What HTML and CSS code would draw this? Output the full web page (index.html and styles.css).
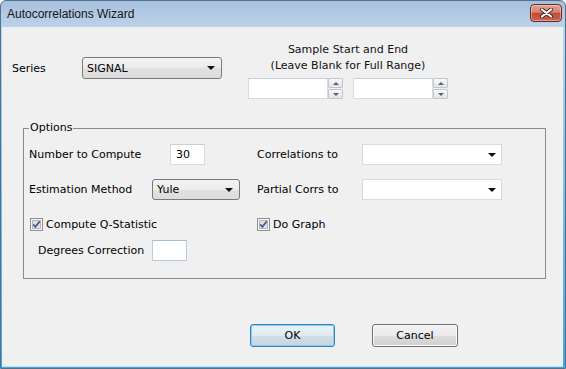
FILE: index.html
```html
<!DOCTYPE html>
<html>
<head>
<meta charset="utf-8">
<title>Autocorrelations Wizard</title>
<link rel="stylesheet" href="styles.css">
</head>
<body>
<div class="window">
  <div class="titlebar">
    <span class="title">Autocorrelations Wizard</span>
    <button class="close" aria-label="Close">
      <svg width="13" height="10" viewBox="0 0 13 10">
        <path d="M2 1.5 L11 8.5 M11 1.5 L2 8.5" stroke="#4e2a2a" stroke-width="4" stroke-linecap="round"/>
        <path d="M2 1.5 L11 8.5 M11 1.5 L2 8.5" stroke="#ffffff" stroke-width="2.2" stroke-linecap="round"/>
      </svg>
    </button>
  </div>
  <div class="client">
    <div class="top">
      <div class="series">
        <span class="lbl series-lbl">Series</span>
        <div class="combo btn-combo series-combo"><span class="combo-text">SIGNAL</span><i class="arrow"></i></div>
      </div>
      <div class="sample">
        <div class="sample-text">Sample Start and End<br>(Leave Blank for Full Range)</div>
        <div class="spins">
          <div class="spin">
            <div class="edit spin-edit"></div>
            <div class="spin-btns"><div class="sb"><i class="tri-up"></i></div><div class="sb"><i class="tri-down"></i></div></div>
          </div>
          <div class="spin">
            <div class="edit spin-edit"></div>
            <div class="spin-btns"><div class="sb"><i class="tri-up"></i></div><div class="sb"><i class="tri-down"></i></div></div>
          </div>
        </div>
      </div>
    </div>

    <fieldset class="group">
      <legend>Options</legend>
      <div class="row row1">
        <div class="cell1"><span class="lbl w-number">Number to Compute</span><div class="edit small-edit">30</div></div>
        <div class="cell2"><span class="lbl w-col2">Correlations to</span><div class="combo white-combo"><i class="arrow"></i></div></div>
      </div>
      <div class="row row2">
        <div class="cell1"><span class="lbl w-method">Estimation Method</span><div class="combo btn-combo yule-combo"><span class="combo-text">Yule</span><i class="arrow"></i></div></div>
        <div class="cell2"><span class="lbl w-col2">Partial Corrs to</span><div class="combo white-combo"><i class="arrow"></i></div></div>
      </div>
      <div class="row row3">
        <div class="cell1 check-cell1">
          <svg class="cb" width="13" height="13" viewBox="0 0 13 13"><rect x="0.5" y="0.5" width="12" height="12" fill="#f7f7f7" stroke="#8e8f8f"/><rect x="2.5" y="2.5" width="8" height="8" fill="#dfe1e4" stroke="#b3b6ba"/><path d="M3.3 6.4 L5.4 8.8 L9.7 3.4" fill="none" stroke="#4a5d87" stroke-width="1.7"/></svg>
          <span class="cb-text">Compute Q-Statistic</span>
        </div>
        <div class="cell2">
          <svg class="cb" width="13" height="13" viewBox="0 0 13 13"><rect x="0.5" y="0.5" width="12" height="12" fill="#f7f7f7" stroke="#8e8f8f"/><rect x="2.5" y="2.5" width="8" height="8" fill="#dfe1e4" stroke="#b3b6ba"/><path d="M3.3 6.4 L5.4 8.8 L9.7 3.4" fill="none" stroke="#4a5d87" stroke-width="1.7"/></svg>
          <span class="cb-text">Do Graph</span>
        </div>
      </div>
      <div class="row row4">
        <div class="cell1"><span class="lbl w-degrees">Degrees Correction</span><div class="edit small-edit blue-edit"></div></div>
      </div>
    </fieldset>

    <div class="buttons">
      <button class="btn default">OK</button>
      <button class="btn cancel">Cancel</button>
    </div>
  </div>
</div>
</body>
</html>
```

FILE: styles.css
```css
* { box-sizing: border-box; }
html, body { margin: 0; padding: 0; }
body {
  width: 566px;
  height: 369px;
  overflow: hidden;
  background: #ffffff;
  font-family: "DejaVu Sans", sans-serif;
  font-size: 11px;
  color: #000;
}
.window {
  width: 566px;
  height: 369px;
  display: flex;
  flex-direction: column;
  border: 1px solid #52718f;
  border-radius: 6px 6px 0 0;
  background: linear-gradient(#a8c0dc 0px, #bcd2ea 26px, #b9d6ef 27px, #3fa9dc 100%);
  overflow: hidden;
}
.titlebar {
  height: 26px;
  flex: none;
  display: flex;
  align-items: flex-start;
  padding-left: 6px;
}
.title {
  font-family: "Liberation Sans", sans-serif;
  font-size: 12px;
  line-height: 16px;
  margin-top: 5px;
  color: #141414;
}
.close {
  margin-left: auto;
  margin-right: 3px;
  margin-top: 3px;
  width: 32px;
  height: 18px;
  padding: 0;
  border: 1px solid #6b2a27;
  border-radius: 4px;
  background: linear-gradient(#e3a394 0%, #d58372 45%, #c34a35 52%, #c9664f 100%);
  box-shadow: inset 0 0 0 1px rgba(255, 230, 220, 0.45);
  display: flex;
  align-items: center;
  justify-content: center;
}
.client {
  flex: 1;
  margin: 0 2px 2px 1px;
  background: #f0f0f0;
  display: flex;
  flex-direction: column;
  box-shadow: 0 1px 0 #c4def3;
}
.lbl {
  display: inline-block;
  flex: none;
  white-space: nowrap;
}

/* top section */
.top {
  display: flex;
  align-items: flex-start;
}
.series {
  display: flex;
  align-items: center;
  margin-top: 30px;
  padding-left: 10px;
}
.series-lbl { width: 70px; }
.combo {
  height: 22px;
  display: flex;
  align-items: center;
  flex: none;
}
.combo-text { padding-left: 4px; }
.arrow {
  margin-left: auto;
  margin-right: 6px;
  width: 0;
  height: 0;
  border-left: 4px solid transparent;
  border-right: 4px solid transparent;
  border-top: 4px solid #111;
}
.btn-combo {
  border: 1px solid #7a7a7a;
  border-radius: 3px;
  background: linear-gradient(#f3f3f3 0%, #ececec 50%, #e1e1e1 51%, #dcdcdc 100%);
}
.series-combo { width: 140px; }
.yule-combo { width: 88px; height: 21px; }
.white-combo {
  width: 140px;
  height: 21px;
  border: 1px solid #dadada;
  background: #fff;
}
.white-combo .arrow { margin-right: 5px; }

.sample {
  margin-left: 26px;
  margin-top: 15px;
  width: 200px;
}
.sample-text {
  text-align: center;
  line-height: 16px;
  color: #111;
}
.spins {
  display: flex;
  gap: 10px;
  margin-top: 4px;
}
.spin { display: flex; }
.edit {
  background: #fff;
  border: 1px solid #d7dce2;
  border-top-color: #c8ced6;
  height: 21px;
  flex: none;
}
.spin-edit { width: 80px; }
.spin-btns {
  display: flex;
  flex-direction: column;
  justify-content: space-between;
  width: 15px;
  height: 21px;
}
.sb {
  height: 10px;
  border: 1px solid #c3c7cc;
  border-radius: 1px;
  background: linear-gradient(#f8f8f8, #e4e4e4);
  display: flex;
  align-items: center;
  justify-content: center;
}
.tri-up, .tri-down {
  width: 0; height: 0;
  border-left: 3px solid transparent;
  border-right: 3px solid transparent;
}
.tri-up { border-bottom: 3px solid #52627c; }
.tri-down { border-top: 3px solid #52627c; }

/* group box */
.group {
  margin: 23px 0 0 21px;
  width: 523px;
  padding: 0 0 17px 0;
  border: 1px solid #8b8b8b;
  min-width: 0;
}
.group legend {
  margin-left: 5px;
  padding: 0 1px;
  line-height: 12px;
  font-size: 11px;
}
.row {
  display: flex;
  align-items: center;
}
.row1 { margin-top: 10px; height: 21px; }
.row2 { margin-top: 14px; height: 21px; }
.row3 { margin-top: 18px; height: 13px; }
.row4 { margin-top: 9px; height: 21px; }
.cell1 {
  width: 233px;
  flex: none;
  display: flex;
  align-items: center;
}
.cell2 {
  display: flex;
  align-items: center;
}
.w-number { margin-left: 5px; width: 141px; }
.w-method { margin-left: 5px; width: 123px; }
.w-degrees { margin-left: 14px; width: 114px; }
.w-col2 { width: 105px; }
.small-edit {
  width: 35px;
  padding-left: 5px;
  line-height: 19px;
}
.blue-edit {
  border-color: #b5cde3;
  border-top-color: #a4bfd8;
}
.check-cell1 .cb { margin-left: 6px; }
.cb { flex: none; display: block; }
.cb-text { margin-left: 3px; white-space: nowrap; }

/* buttons */
.buttons {
  display: flex;
  margin-top: 45px;
  padding-left: 248px;
}
.btn {
  height: 23px;
  padding: 0;
  font-family: "DejaVu Sans", sans-serif;
  font-size: 11px;
  color: #000;
  border-radius: 3px;
}
.default {
  width: 85px;
  border: 1px solid #3c7fb1;
  background: linear-gradient(#eaf3f9 0%, #dfeaf2 50%, #d1dee8 51%, #c8d6e1 100%);
  box-shadow: inset 0 0 0 1px #7fd2f5;
}
.cancel {
  width: 86px;
  margin-left: 37px;
  border: 1px solid #707070;
  background: linear-gradient(#f2f2f2 0%, #ebebeb 50%, #dddddd 51%, #d0d0d0 100%);
  box-shadow: inset 0 0 0 1px #fbfbfb;
}
```
